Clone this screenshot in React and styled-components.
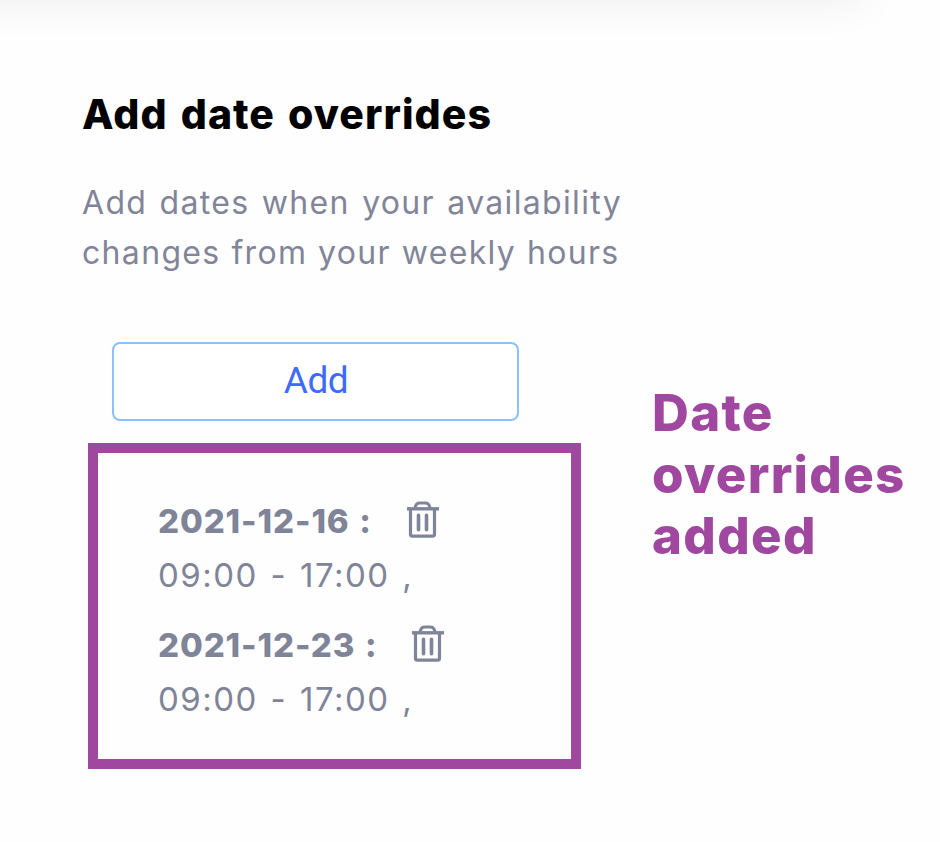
import React from "react";
import styled, { createGlobalStyle } from "styled-components";

const GlobalStyle = createGlobalStyle`
  * {
    box-sizing: border-box;
  }
  body {
    margin: 0;
    background: #fefefe;
    font-family: Inter, "Liberation Sans", sans-serif;
  }
`;

const Page = styled.main`
  width: 940px;
  height: 842px;
  overflow: hidden;
`;

// bottom edge of the card above, only its shadow shows
const CardEdge = styled.div`
  width: 964px;
  height: 120px;
  margin: -120px 0 0 -100px;
  box-shadow: 0 0 46px rgba(0, 0, 0, 0.07);
`;

const Content = styled.div`
  display: grid;
  grid-template-columns: 569px 1fr;
  padding: 90px 0 0 83px;
`;

const Title = styled.h1`
  margin: 0 0 0 -1px;
  font-size: 41px;
  line-height: 48px;
  font-weight: 800;
  letter-spacing: 1.05px;
  word-spacing: 3px;
  color: #000;
  white-space: nowrap;
`;

const Text = styled.p`
  margin: 40px 0 0 -1px;
  font-size: 32px;
  line-height: 50px;
  letter-spacing: 1.33px;
  color: #828599;
  white-space: nowrap;
`;

const Line = styled.span`
  display: block;
  word-spacing: ${(props) => props.gap}px;
`;

const AddButton = styled.button`
  display: block;
  width: 407px;
  height: 79px;
  margin: 64px 0 0 29px;
  padding: 0 0 2px 1px;
  border: 2px solid #8bc1fb;
  border-radius: 8px;
  background: #fff;
  color: #3d6bff;
  font-family: Roboto, sans-serif;
  font-size: 37px;
  letter-spacing: -0.4px;
`;

const Overrides = styled.ul`
  width: 493px;
  height: 326px;
  margin: 22px 0 0 5px;
  padding: 41px 0 0 60px;
  border: 10px solid #a0489f;
  list-style: none;
  color: #808498;
  font-size: 33px;
  line-height: 54px;
`;

const Override = styled.li`
  height: 124px;
  white-space: pre;
`;

const DateRow = styled.div`
  display: flex;
  align-items: flex-start;
  height: 54px;
`;

const DateText = styled.strong`
  width: ${(props) => props.width}px;
  font-weight: 800;
  letter-spacing: 0.9px;
  word-spacing: 1.5px;
`;

const Hours = styled.div`
  letter-spacing: 1.5px;
  word-spacing: 1.9px;
`;

const Note = styled.h2`
  margin: 292px 0 0;
  font-size: 51px;
  line-height: 61.5px;
  font-weight: 800;
  letter-spacing: 1.3px;
  color: #a0489f;
`;

const Trash = styled.svg`
  flex: none;
  margin-top: 7px;
`;

const TrashIcon = () => (
  <Trash width="34" height="38" viewBox="0 0 34 38" fill="none" stroke="#808498">
    <path d="M9 6.5C10 3.2 11.2 2.1 13.5 2.1h6c2.3 0 3.5 1.1 4.5 4.4" strokeWidth="3" />
    <path d="M1 7.8h32" strokeWidth="3.4" />
    <path d="M4.5 9v24.2q0 2 2 2h20q2 0 2-2V9" strokeWidth="3.2" />
    <path d="M12.5 14.3v14.5M20.5 14.3v14.5" strokeWidth="3.6" strokeLinecap="round" />
  </Trash>
);

const overrides = [
  { date: "2021-12-16", hours: "09:00 - 17:00 ,", width: 248 },
  { date: "2021-12-23", hours: "09:00 - 17:00 ,", width: 253 },
];

export default function App() {
  return (
    <Page>
      <GlobalStyle />
      <CardEdge />
      <Content>
        <section>
          <Title>Add date overrides</Title>
          <Text>
            <Line gap={2}>Add dates when your availability</Line>
            <Line gap={0.5}>changes from your weekly hours</Line>
          </Text>
          <AddButton>Add</AddButton>
          <Overrides>
            {overrides.map(({ date, hours, width }) => (
              <Override key={date}>
                <DateRow>
                  <DateText width={width}>{date} :</DateText>
                  <TrashIcon />
                </DateRow>
                <Hours>{hours}</Hours>
              </Override>
            ))}
          </Overrides>
        </section>
        <Note>
          Date
          <br />
          overrides
          <br />
          added
        </Note>
      </Content>
    </Page>
  );
}
